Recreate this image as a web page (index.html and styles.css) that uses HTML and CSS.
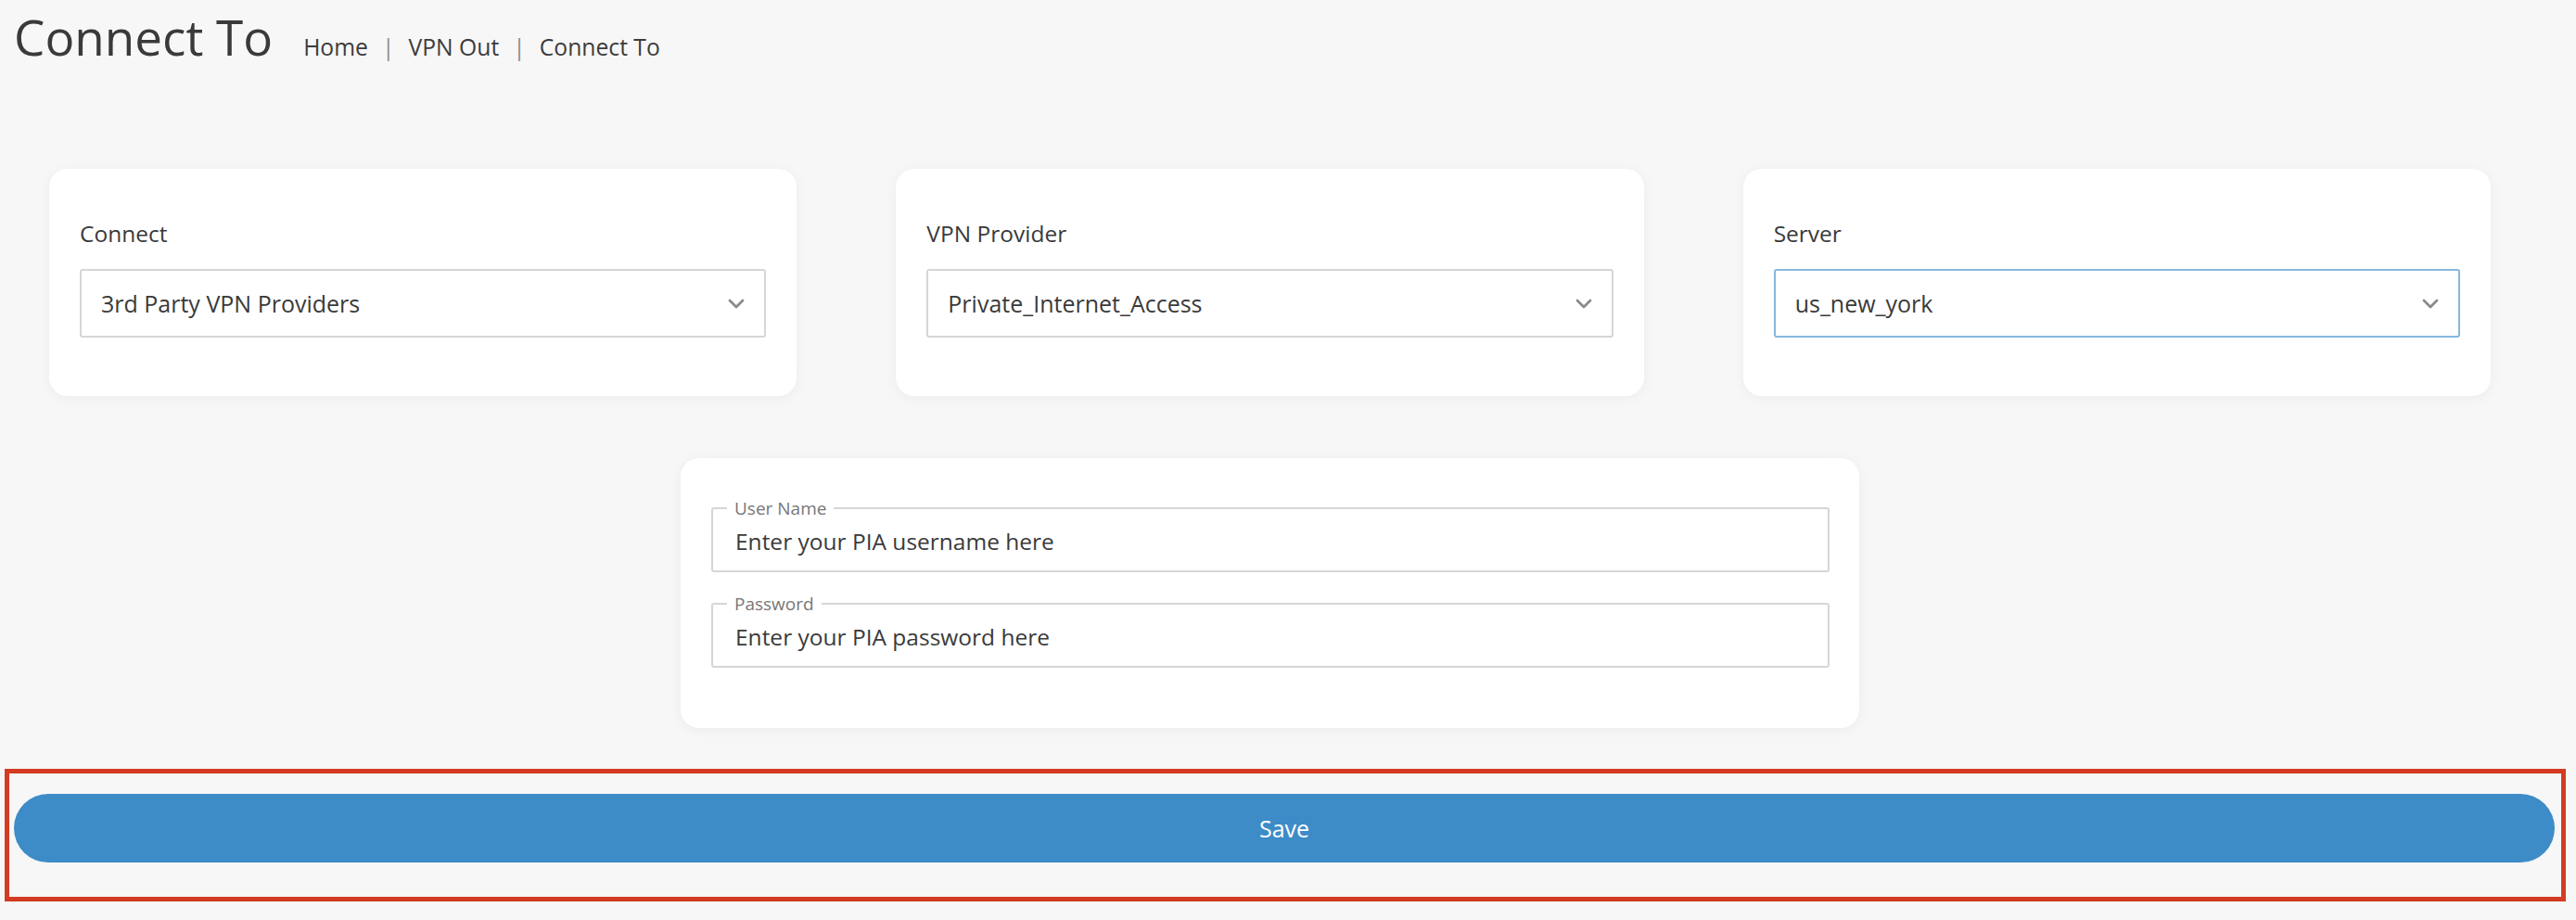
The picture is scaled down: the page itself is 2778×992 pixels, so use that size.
FILE: index.html
```html
<!DOCTYPE html>
<html lang="en">
<head>
    <meta charset="UTF-8">
    <meta name="viewport" content="width=device-width, initial-scale=1.0">
    <title>Connect To</title>
    <link rel="stylesheet" href="styles.css">
</head>
<body>
    <div class="page-header">
        <h1>Connect To</h1>
        <div class="breadcrumb">
            <span>Home</span>
            <span class="sep">|</span>
            <span>VPN Out</span>
            <span class="sep">|</span>
            <span>Connect To</span>
        </div>
    </div>

    <div class="cards">
        <div class="card">
            <label class="field-label">Connect</label>
            <div class="select-wrap">
                <select>
                    <option>3rd Party VPN Providers</option>
                </select>
                <svg class="chevron" width="18" height="11" viewBox="0 0 18 11"><path d="M2 2l7 7 7-7" fill="none" stroke="#8a8a8a" stroke-width="2.8" stroke-linecap="round" stroke-linejoin="round"/></svg>
            </div>
        </div>
        <div class="card">
            <label class="field-label">VPN Provider</label>
            <div class="select-wrap">
                <select>
                    <option>Private_Internet_Access</option>
                </select>
                <svg class="chevron" width="18" height="11" viewBox="0 0 18 11"><path d="M2 2l7 7 7-7" fill="none" stroke="#8a8a8a" stroke-width="2.8" stroke-linecap="round" stroke-linejoin="round"/></svg>
            </div>
        </div>
        <div class="card">
            <label class="field-label">Server</label>
            <div class="select-wrap">
                <select class="focused">
                    <option>us_new_york</option>
                </select>
                <svg class="chevron" width="18" height="11" viewBox="0 0 18 11"><path d="M2 2l7 7 7-7" fill="none" stroke="#8a8a8a" stroke-width="2.8" stroke-linecap="round" stroke-linejoin="round"/></svg>
            </div>
        </div>
    </div>

    <div class="login-row">
        <div class="card login-card">
            <fieldset>
                <legend>User Name</legend>
                <input type="text" placeholder="Enter your PIA username here">
            </fieldset>
            <fieldset>
                <legend>Password</legend>
                <input type="password" placeholder="Enter your PIA password here">
            </fieldset>
        </div>
    </div>

    <div class="save-box">
        <button>Save</button>
    </div>
</body>
</html>
```

FILE: styles.css
```css
body {
    margin: 0;
    background: #f7f7f7;
    font-family: "Open Sans", Arial, sans-serif;
    color: #3a3a3a;
}
.page-header {
    display: flex;
    align-items: baseline;
    padding: 9px 14px 0 15px;
}
h1 {
    margin: 0;
    font-size: 53px;
    font-weight: 400;
    line-height: 62px;
    color: #3a3a3a;
}
.breadcrumb {
    display: flex;
    margin-left: 33px;
    font-size: 24.7px;
    color: #3c3c3c;
}
.breadcrumb .sep {
    margin: 0 15px;
    color: #8c8c8c;
}
.cards {
    display: grid;
    grid-template-columns: repeat(3, 1fr);
    gap: 107px;
    padding: 0 92px 0 53px;
    margin-top: 111px;
}
.card {
    background: #fff;
    border-radius: 20px;
    box-shadow: 0 2px 14px rgba(0, 0, 0, 0.05);
    padding: 55px 33px 63px;
}
.field-label {
    display: block;
    font-size: 24.5px;
    line-height: 30px;
    margin-bottom: 23px;
}
.select-wrap {
    position: relative;
}
select {
    appearance: none;
    -webkit-appearance: none;
    width: 100%;
    height: 74px;
    box-sizing: border-box;
    border: 2px solid #d6d6d6;
    border-radius: 3px;
    background: #fff;
    padding: 0 50px 0 21px;
    font-family: inherit;
    font-size: 25px;
    color: #3a3a3a;
    outline: none;
}
select.focused {
    border-color: #85b8e0;
}
.chevron {
    position: absolute;
    right: 23px;
    top: 32px;
}
.login-row {
    display: flex;
    justify-content: center;
    padding: 0 92px 0 53px;
    margin-top: 67px;
}
.login-card {
    width: 1271px;
    box-sizing: border-box;
    padding: 44px 32px 65px 33px;
}
fieldset {
    margin: 0;
    border: 2px solid #d6d6d6;
    border-radius: 3px;
    padding: 0 15px 7px;
}
fieldset + fieldset {
    margin-top: 24px;
}
legend {
    padding: 0 8px;
    font-size: 19px;
    line-height: 20px;
    color: #777;
}
fieldset input {
    display: block;
    width: 100%;
    height: 50px;
    box-sizing: border-box;
    border: none;
    padding: 0 9px;
    font-family: inherit;
    font-size: 24.5px;
    color: #3a3a3a;
    outline: none;
    background: transparent;
}
fieldset input::placeholder {
    color: #3a3a3a;
}
.save-box {
    margin: 44px 11px 0 5px;
    border: 5px solid #d33b22;
    padding: 22px 7px 37px 5px;
}
button {
    display: block;
    width: 100%;
    height: 74px;
    border: none;
    border-radius: 37px;
    background: #3d8cc7;
    color: #fff;
    font-family: inherit;
    font-size: 25px;
    cursor: pointer;
}
```
